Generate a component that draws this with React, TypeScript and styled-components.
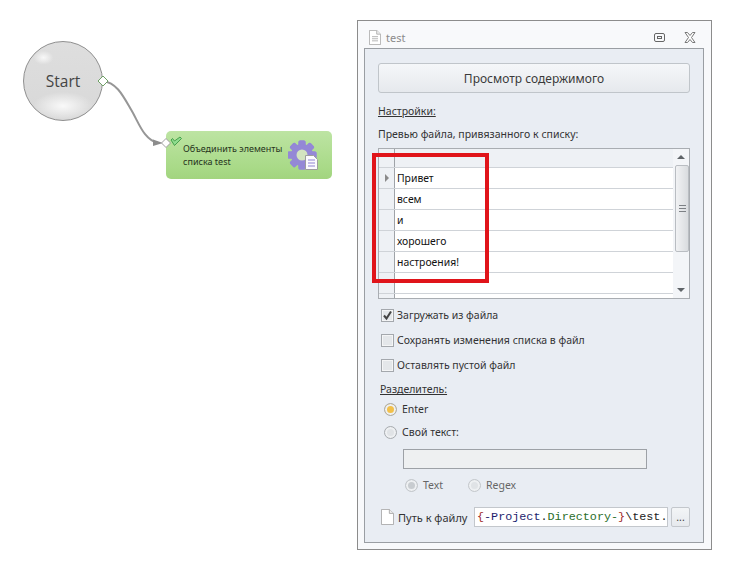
import * as React from 'react';
import styled, {createGlobalStyle} from 'styled-components';

const GlobalStyle = createGlobalStyle`
  html, body {
    margin: 0;
    padding: 0;
    background: #fff;
  }
  body {
    font-family: 'Noto Sans', 'Liberation Sans', sans-serif;
    font-size: 10.5px;
    color: #333;
  }
`;

const Page = styled.div`
  display: flex;
  width: 755px;
  height: 580px;
  overflow: hidden;
`;

/* free canvas with the diagram nodes */
const Canvas = styled.div`
  position: relative;
  width: 357px;
  height: 580px;
  flex: none;
`;

const StartNode = styled.div`
  position: absolute;
  left: 23px;
  top: 41px;
  width: 80px;
  height: 80px;
  box-sizing: border-box;
  border: 1px solid #8f8f8f;
  border-radius: 50%;
  display: flex;
  align-items: center;
  justify-content: center;
  font-family: 'Open Sans', 'Liberation Sans', sans-serif;
  font-size: 15.5px;
  color: #444;
  background:
    radial-gradient(ellipse 10px 7px at 25% 20%, rgba(255, 255, 255, 0.8), rgba(255, 255, 255, 0) 100%),
    radial-gradient(ellipse 30px 14px at 50% 82%, rgba(255, 255, 255, 0.85), rgba(255, 255, 255, 0) 100%),
    linear-gradient(#dedede, #d8d8d8);
`;

const Link = styled.svg`
  position: absolute;
  left: 96px;
  top: 74px;
`;

const ActionNode = styled.div`
  position: absolute;
  left: 166px;
  top: 131px;
  width: 166px;
  height: 48px;
  box-sizing: border-box;
  padding: 11px 14px 0 17px;
  border-radius: 5px;
  display: flex;
  justify-content: space-between;
  background: linear-gradient(#bde4a3, #a9da88 75%, #a2d47f);
`;

const ActionLabel = styled.div`
  font-size: 9px;
  line-height: 13px;
  color: #26331c;
  white-space: nowrap;
`;

const NodeCheck = styled.svg`
  position: absolute;
  left: 4px;
  top: 5px;
`;

const Window = styled.div`
  width: 355px;
  height: 530px;
  margin-top: 20px;
  box-sizing: border-box;
  border: 1px solid #8c8c8c;
  background: #f8f9fb;
  display: flex;
  flex-direction: column;
  flex: none;
`;

const TitleBar = styled.div`
  height: 27px;
  flex: none;
  box-sizing: border-box;
  display: flex;
  align-items: center;
  padding: 5px 15px 0 11px;
  color: #8b8b8b;
  font-size: 11px;
`;

const TitleText = styled.span`
  margin-left: 5px;
  flex: 1;
`;

const TitleButton = styled.svg<{$gap?: number}>`
  margin-left: ${({$gap}) => $gap || 0}px;
`;

const Panel = styled.div`
  flex: 1;
  margin: 0 7px 6px 6px;
  box-sizing: border-box;
  border: 1px solid #9a9ea3;
  background: #e9edf3;
  padding: 14px 13px 0 13px;
  display: flex;
  flex-direction: column;
`;

const ViewButton = styled.div`
  height: 30px;
  box-sizing: border-box;
  border: 1px solid #c0c5ca;
  border-radius: 3px;
  background: linear-gradient(#f5f7f9, #e6e9ed);
  display: flex;
  align-items: center;
  justify-content: center;
  font-size: 12px;
  color: #3a3a3a;
`;

const SectionLabel = styled.div<{$top: number; $left?: number}>`
  margin-top: ${({$top}) => $top}px;
  margin-left: ${({$left}) => $left || 0}px;
  line-height: 14px;
  color: #333;
`;

const Underlined = styled.span`
  text-decoration: underline;
`;

const GridBox = styled.div`
  position: relative;
  margin-top: 7px;
  height: 151px;
  box-sizing: border-box;
  border: 1px solid #a9adb2;
  display: flex;
  background: #eef1f5;
`;

const GridBody = styled.div`
  flex: 1;
  display: flex;
  flex-direction: column;
  overflow: hidden;
`;

const GridRow = styled.div<{$height: number}>`
  height: ${({$height}) => $height}px;
  flex: none;
  display: flex;
  box-sizing: border-box;
  border-bottom: 1px solid #cfd3d8;
`;

const RowHead = styled.div`
  width: 16px;
  flex: none;
  box-sizing: border-box;
  border-right: 1px solid #9fa3a8;
  display: flex;
  align-items: center;
  justify-content: center;
`;

const RowCell = styled.div<{$filled: boolean}>`
  flex: 1;
  padding-left: 2px;
  display: flex;
  align-items: center;
  font-size: 10.4px;
  color: #111;
  background: ${({$filled}) => ($filled ? '#fff' : 'transparent')};
`;

const RowArrow = styled.span`
  width: 0;
  height: 0;
  border-left: 4px solid #8a8a8a;
  border-top: 4px solid transparent;
  border-bottom: 4px solid transparent;
`;

const ScrollBar = styled.div`
  width: 16px;
  flex: none;
  display: flex;
  flex-direction: column;
  align-items: center;
  background: #f3f5f8;
`;

const ScrollArrow = styled.div<{$down?: boolean}>`
  height: 16px;
  flex: none;
  display: flex;
  align-items: center;
  &::before {
    content: '';
    border-left: 4px solid transparent;
    border-right: 4px solid transparent;
    ${({$down}) =>
      $down ? 'border-top: 4px solid #5f6468;' : 'border-bottom: 4px solid #5f6468;'}
  }
`;

const ScrollThumb = styled.div`
  width: 14px;
  height: 87px;
  flex: none;
  align-self: flex-end;
  box-sizing: border-box;
  border: 1px solid #b9bdc2;
  border-radius: 2px;
  background: linear-gradient(90deg, #f1f2f4, #d9dcdf);
  display: flex;
  align-items: center;
  justify-content: center;
`;

const ScrollSpace = styled.div`
  flex: 1;
`;

const Grip = styled.div`
  width: 7px;
  height: 5px;
  border-top: 1px solid #7c8085;
  border-bottom: 1px solid #7c8085;
  position: relative;
  &::after {
    content: '';
    position: absolute;
    left: 0;
    right: 0;
    top: 2px;
    height: 1px;
    background: #7c8085;
  }
`;

const Highlight = styled.div`
  position: absolute;
  left: -7px;
  top: 4px;
  width: 117px;
  height: 130px;
  box-sizing: border-box;
  border: 4px solid #e0141a;
  pointer-events: none;
`;

const CheckList = styled.div`
  margin-top: 6px;
  margin-left: 3px;
  display: flex;
  flex-direction: column;
  gap: 5px;
`;

const CheckRow = styled.div`
  height: 20px;
  display: flex;
  align-items: center;
`;

const CheckBox = styled.span`
  width: 13px;
  height: 13px;
  box-sizing: border-box;
  flex: none;
  margin-right: 3px;
  border: 1px solid #a4a8ad;
  background: #e4e7ea;
  box-shadow: inset 0 0 0 1px #f4f5f6;
  display: flex;
  align-items: center;
  justify-content: center;
`;

const RadioList = styled.div`
  margin-top: 3px;
  margin-left: 6px;
  display: flex;
  flex-direction: column;
  gap: 3px;
`;

const RadioRow = styled.div<{$muted?: boolean}>`
  height: 20px;
  display: flex;
  align-items: center;
  color: ${({$muted}) => ($muted ? '#666' : '#333')};
`;

const Radio = styled.span<{$dot?: string; $faint?: boolean}>`
  width: 13px;
  height: 13px;
  flex: none;
  margin-right: 5px;
  box-sizing: border-box;
  border-radius: 50%;
  border: 1px solid ${({$faint}) => ($faint ? '#c4c8cc' : '#a8acb0')};
  background: ${({$dot}) => $dot || '#e0e3e6'};
  box-shadow: inset 0 0 0 2px #eef0f2;
`;

const DisabledInput = styled.div`
  height: 20px;
  margin: 7px 43px 0 25px;
  box-sizing: border-box;
  border: 1px solid #9da1a6;
  background: #eef0f1;
`;

const ModeRow = styled.div`
  margin-top: 6px;
  margin-left: 27px;
  display: flex;
`;

const ModeItem = styled(RadioRow)`
  width: 63px;
`;

const FileRow = styled.div`
  margin-top: 12px;
  margin-left: 3px;
  height: 20px;
  display: flex;
  align-items: center;
`;

const FileLabel = styled.span`
  margin-left: 4px;
  width: 76px;
  flex: none;
  white-space: nowrap;
  font-size: 11px;
`;

const PathInput = styled.div`
  width: 194px;
  height: 20px;
  box-sizing: border-box;
  flex: none;
  border: 1px solid #c3c7cc;
  background: #fff;
  padding-left: 2px;
  overflow: hidden;
  white-space: nowrap;
  font-family: 'Liberation Mono', monospace;
  font-size: 11.75px;
  line-height: 18px;
  color: #222;
`;

const Token = styled.span<{$color: string}>`
  color: ${({$color}) => $color};
`;

const BrowseButton = styled.div`
  width: 19px;
  height: 20px;
  margin-left: 3px;
  box-sizing: border-box;
  border: 1px solid #c3c7cc;
  border-radius: 2px;
  background: linear-gradient(#f3f5f7, #e6e9ed);
  display: flex;
  align-items: center;
  justify-content: center;
  line-height: 12px;
  color: #444;
`;

const rows = ['Привет', 'всем', 'и', 'хорошего', 'настроения!', '', '', ''];

const PageIcon = ({lines, width, height}: {lines?: boolean; width: number; height: number}) => (
  <svg width={width} height={height} viewBox="0 0 14 18" preserveAspectRatio="none" style={{flex: 'none'}}>
    <path d="M.5 .5h8.500l4.500 4.500v12.500h-13z" fill="#fff" stroke="#a9a9a9" />
    <path d="M9 .5v4.500h4.500" fill="#eee" stroke="#a9a9a9" />
    {lines && <path d="M3.500 8h7M3.500 10.500h7M3.500 13h7" stroke="#aaa" />}
  </svg>
);

const Gear = () => (
  <svg width="30" height="30" viewBox="0 0 30 30" style={{flex: 'none', marginTop: -2}}>
    <g fill="#9488d6">
      {[0, 45, 90, 135, 180, 225, 270, 315].map(a => (
        <rect key={a} x="10.500" y="0.500" width="7" height="29" rx="1.500" transform={`rotate(${a} 14 15)`} />
      ))}
      <circle cx="14" cy="15" r="11" />
    </g>
    <circle cx="14" cy="15" r="5.500" fill="#d3e4c0" />
    <path d="M17.500 15.500h8l4 4v10h-12z" fill="#fbfbfe" stroke="#9e9e9e" />
    <path d="M20 20h7M20 23h7M20 26h7" stroke="#8f83d2" />
  </svg>
);

export default function App() {
  return (
    <Page>
      <GlobalStyle />
      <Canvas>
        <StartNode>Start</StartNode>
        <ActionNode>
          <NodeCheck width="12" height="10" viewBox="0 0 12 10">
            <path d="M1 4l1.500-1.500 2 2.500L10 1l1.500 1.500-7 7z" fill="#8fdc8e" stroke="#2f8f3a" strokeWidth=".8" />
          </NodeCheck>
          <ActionLabel>
            Объединить элементы
            <br />
            списка test
          </ActionLabel>
          <Gear />
        </ActionNode>
        <Link width="80" height="80" viewBox="0 0 80 80">
          <path
            d="M7 7C22 9 28 24 37 39C44 52 49 66 62 69"
            fill="none"
            stroke="#969696"
            strokeWidth="2"
          />
          <path d="M57 65.500l10 3.500-10 3z" fill="#8c8c8c" />
          <path d="M7 2l5 5-5 5-5-5z" fill="#fff" stroke="#6fa066" />
          <path d="M70 64.500l4.500 4.500-4.500 4.500-4.500-4.500z" fill="#fff" stroke="#a0a0a0" />
        </Link>
      </Canvas>
      <Window>
        <TitleBar>
          <PageIcon lines width={12} height={15} />
          <TitleText>test</TitleText>
          <TitleButton width="11" height="9" viewBox="0 0 11 9">
            <rect x=".5" y=".5" width="10" height="8" rx="1.500" fill="none" stroke="#666" />
            <rect x="3.500" y="3.500" width="4" height="2" fill="none" stroke="#666" />
          </TitleButton>
          <TitleButton $gap={19} width="12" height="11" viewBox="0 0 12 11">
            <path
              d="M1 .5h2.500l2.500 3 2.500-3h2.500l-3.500 5 3.500 5h-2.500l-2.500-3-2.500 3h-2.500l3.500-5z"
              fill="#fff"
              stroke="#777"
            />
          </TitleButton>
        </TitleBar>
        <Panel>
          <ViewButton>Просмотр содержимого</ViewButton>
          <SectionLabel $top={11}>
            <Underlined>Настройки:</Underlined>
          </SectionLabel>
          <SectionLabel $top={9}>Превью файла, привязанного к списку:</SectionLabel>
          <GridBox>
            <GridBody>
              <GridRow $height={19}>
                <RowHead />
                <RowCell $filled={false} />
              </GridRow>
              {rows.map((text, i) => (
                <GridRow key={i} $height={21}>
                  <RowHead>{i === 0 && <RowArrow />}</RowHead>
                  <RowCell $filled>{text}</RowCell>
                </GridRow>
              ))}
            </GridBody>
            <ScrollBar>
              <ScrollArrow />
              <ScrollThumb>
                <Grip />
              </ScrollThumb>
              <ScrollSpace />
              <ScrollArrow $down />
            </ScrollBar>
            <Highlight />
          </GridBox>
          <CheckList>
            <CheckRow>
              <CheckBox>
                <svg width="11" height="11" viewBox="0 0 11 11">
                  <path d="M2 5.500l2.500 3L9 1.500" fill="none" stroke="#444" strokeWidth="2" />
                </svg>
              </CheckBox>
              Загружать из файла
            </CheckRow>
            <CheckRow>
              <CheckBox />
              Сохранять изменения списка в файл
            </CheckRow>
            <CheckRow>
              <CheckBox />
              Оставлять пустой файл
            </CheckRow>
          </CheckList>
          <SectionLabel $top={7} $left={2}>
            <Underlined>Разделитель:</Underlined>
          </SectionLabel>
          <RadioList>
            <RadioRow>
              <Radio $dot="#f2c04a" />
              Enter
            </RadioRow>
            <RadioRow>
              <Radio />
              Свой текст:
            </RadioRow>
          </RadioList>
          <DisabledInput />
          <ModeRow>
            <ModeItem $muted>
              <Radio $faint $dot="#c8ccd0" />
              Text
            </ModeItem>
            <ModeItem $muted>
              <Radio $faint />
              Regex
            </ModeItem>
          </ModeRow>
          <FileRow>
            <PageIcon width={13} height={16} />
            <FileLabel>Путь к файлу</FileLabel>
            <PathInput>
              <Token $color="#a02a2a">{'{'}</Token>
              <Token $color="#1d1d6e">-Project</Token>.
              <Token $color="#2a6e2a">Directory-</Token>
              <Token $color="#a02a2a">{'}'}</Token>
              \test.
            </PathInput>
            <BrowseButton>...</BrowseButton>
          </FileRow>
        </Panel>
      </Window>
    </Page>
  );
}
